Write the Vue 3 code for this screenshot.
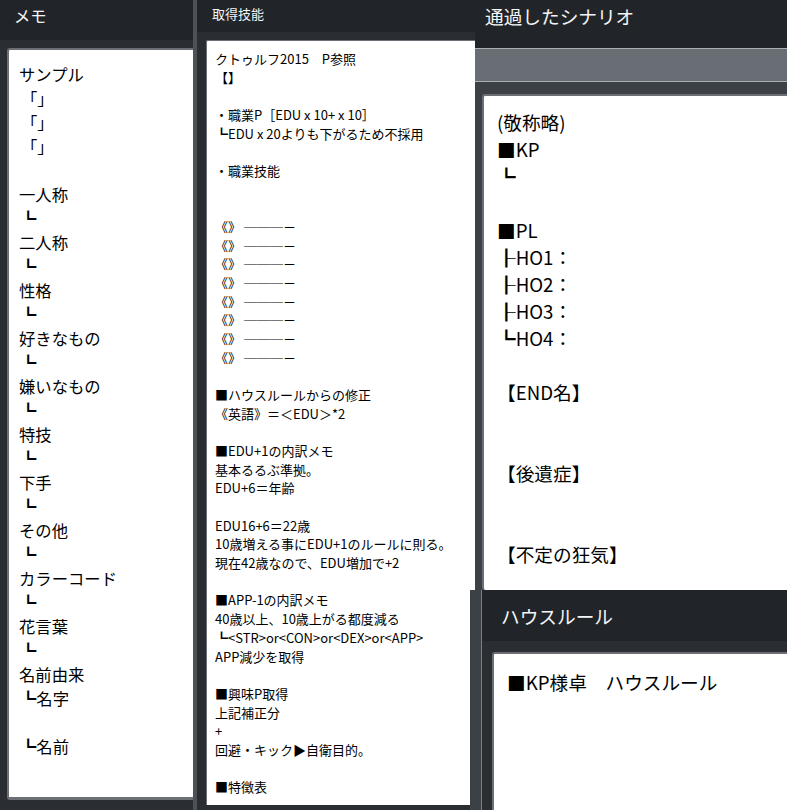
<script setup>
const memo = ['サンプル','「」','「」','「」','','一人称','┗','二人称','┗','性格','┗','好きなもの','┗','嫌いなもの','┗','特技','┗','下手','┗','その他','┗','カラーコード','┗','花言葉','┗','名前由来','┗名字','','┗名前']
const skills = ['クトゥルフ2015　P参照','【】','','・職業P［EDU x 10+ x 10］','┗EDU x 20よりも下がるため不採用','','・職業技能','','','《》 ───－','《》 ───－','《》 ───－','《》 ───－','《》 ───－','《》 ───－','《》 ───－','《》 ───－','','■ハウスルールからの修正','《英語》＝＜EDU＞*2','','■EDU+1の内訳メモ','基本るるぶ準拠。','EDU+6＝年齢','','EDU16+6＝22歳','10歳増える事にEDU+1のルールに則る。','現在42歳なので、EDU増加で+2','','■APP-1の内訳メモ','40歳以上、10歳上がる都度減る','┗<STR>or<CON>or<DEX>or<APP>','APP減少を取得','','■興味P取得','上記補正分','+','回避・キック▶自衛目的。','','■特徴表']
const scen = ['(敬称略)','■KP','┗','','■PL','┠HO1：','┠HO2：','┠HO3：','┗HO4：','','【END名】','','','【後遺症】','','','【不定の狂気】']
</script>

<template>
  <div class="page">
    <section class="col left">
      <h2 class="head memo-head">メモ</h2>
      <div class="card memo-card">
        <div v-for="(l, i) in memo" :key="i" class="line" :class="{ ind: l.startsWith('┗'), ind3: l === '「」' }">{{ l || '\u00a0' }}</div>
      </div>
    </section>
    <section class="col mid">
      <h2 class="head skill-head">取得技能</h2>
      <div class="card skill-card">
        <div v-for="(l, i) in skills" :key="i" class="line">{{ l || '\u00a0' }}</div>
      </div>
    </section>
    <section class="col right">
      <div class="top">
        <h2 class="head scen-head">通過したシナリオ</h2>
        <div class="bar"></div>
        <div class="scen-wrap">
          <div class="card scen-card">
            <div v-for="(l, i) in scen" :key="i" class="line">{{ l || '\u00a0' }}</div>
          </div>
        </div>
      </div>
      <div class="bottom">
        <div class="strip"></div>
        <div class="house">
          <h2 class="head house-head">ハウスルール</h2>
          <div class="house-body">
            <div class="card house-card">■KP様卓　ハウスルール</div>
          </div>
        </div>
      </div>
    </section>
  </div>
</template>

<style>
html, body { margin: 0; background: #343a40; }
</style>

<style scoped>
.page { display: flex; width: 787px; height: 810px; overflow: hidden; background: #343a40; color: #000; font-family: "Noto Sans CJK JP", "Noto Sans", sans-serif; }
.col { display: flex; flex-direction: column; flex: none; box-sizing: border-box; }
.head { margin: 0; font-weight: 400; color: #f4f5f6; background: #212529; box-sizing: border-box; }
.card { background: #fff; border-top: 2px solid #6c6f75; border-left: 2px solid #6c6f75; border-radius: 3px 0 0 3px; box-sizing: border-box; }
.line { white-space: pre; }
.left { width: 193px; background: #2a2e33; }
.memo-head { height: 40px; padding-left: 14px; font-size: 16.33px; line-height: 30px; }
.memo-card { margin: 8px 0 10px 7px; height: 752px; padding: 12px 0 0 10px; font-size: 16.33px; line-height: 24px; border-bottom: 3px solid #6c6f75; }
.ind { padding-left: 1px; }
.ind3 { padding-left: 2px; }
.mid { width: 282px; padding-left: 4px; background: #2a2e33; box-shadow: inset 4px 0 0 #4d5257; }
.skill-head { height: 32px; padding-left: 15px; font-size: 13px; line-height: 28px; }
.skill-card { margin: 8px 0 0 9px; width: 269px; height: 765px; padding: 9px 0 0 8px; font-size: 13px; line-height: 18.67px; border-width: 1px 0 0 1px; border-radius: 2px 0 0 0; }
.right { width: 317px; margin-left: -5px; }
.top { margin-left: 5px; height: 590px; display: flex; flex-direction: column; background: #343a40; }
.scen-head { height: 48px; padding-left: 10px; font-size: 18.67px; line-height: 31px; }
.bar { height: 34px; background: #686e73; border-top: 1px solid #adb0b3; border-bottom: 1px solid #adb0b3; box-sizing: border-box; }
.scen-wrap { flex: 1; padding: 12px 0 0 7px; min-height: 0; background: #3c4145; }
.scen-card { height: 496px; padding: 12px 0 0 13px; font-size: 18.67px; line-height: 27px; }
.bottom { display: flex; flex: 1; min-height: 0; }
.strip { width: 12px; flex: none; background: #3c4145; border-right: 1px solid #7c8084; box-sizing: border-box; }
.house { flex: 1; display: flex; flex-direction: column; min-width: 0; background: #2a2e33; }
.house-head { height: 53px; padding-left: 19px; font-size: 18.67px; line-height: 51px; }
.house-body { padding: 11px 0 0 10px; }
.house-card { height: 160px; padding: 14px 0 0 13px; font-size: 18.67px; line-height: 27px; }
</style>
